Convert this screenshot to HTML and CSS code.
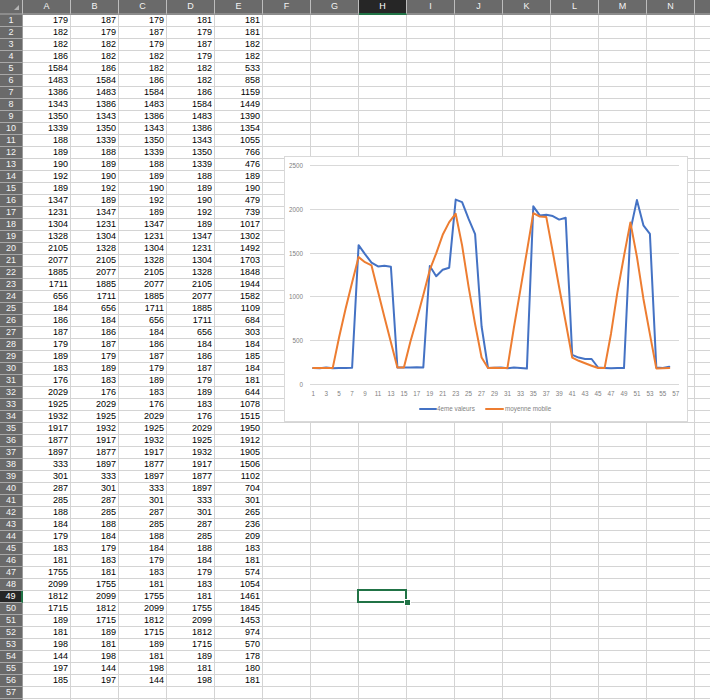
FILE: index.html
```html
<!DOCTYPE html>
<html lang="fr">
<head>
    <meta charset="UTF-8">
    <title>Feuille de calcul</title>
    <link rel="stylesheet" href="styles.css">
</head>
<body>
    <div id="sheet">
        <table id="grid">
            <thead id="grid-head"></thead>
            <tbody id="grid-body"></tbody>
        </table>

        <div id="selected-cell"></div>

        <div id="chart">
            <svg id="chart-svg" width="404" height="266" viewBox="0 0 404 266"></svg>
        </div>
    </div>

    <script src="sheet.js"></script>
</body>
</html>
```

FILE: styles.css
```css
html, body {
    margin: 0;
    padding: 0;
    background: #fff;
}

#sheet {
    position: relative;
    width: 710px;
    height: 700px;
    overflow: hidden;
    font-family: "Liberation Sans", Arial, sans-serif;
}

#grid {
    border-collapse: separate;
    border-spacing: 0;
    table-layout: fixed;
    width: 743px;
    font-size: 9px;
    color: #000;
}

#grid th,
#grid td {
    box-sizing: border-box;
    padding: 0;
    width: 48px;
    height: 12px;
    line-height: 11px;
    border-right: 1px solid #d4d4d4;
    border-bottom: 1px solid #d4d4d4;
    overflow: hidden;
}

#grid td {
    text-align: right;
    padding-right: 2px;
}

#grid th {
    background: #6a6a6a;
    color: #f4f4f4;
    font-weight: normal;
    text-align: center;
}

#grid thead th {
    height: 15px;
    line-height: 13px;
    border-right: 1px solid #bdbdbd;
    border-bottom: 2px solid #8c8c8c;
}

#grid .corner {
    position: relative;
    width: 23px;
}

.corner::after {
    content: "";
    position: absolute;
    right: 3px;
    bottom: 3px;
    border-left: 5px solid transparent;
    border-bottom: 5px solid #b4b4b4;
}

#grid tbody th {
    width: 23px;
    border-right: 1px solid #9c9c9c;
    border-bottom: 1px solid #a8a8a8;
}

#grid thead th.active {
    background: #262626;
    color: #fff;
    border-bottom: 2px solid #217346;
}

#grid tbody th.active {
    background: #262626;
    color: #fff;
    border-right: 2px solid #217346;
}

#selected-cell {
    position: absolute;
    left: 357px;
    top: 589px;
    width: 46px;
    height: 10px;
    border: 2px solid #217346;
}

#selected-cell::after {
    content: "";
    position: absolute;
    right: -5px;
    bottom: -4px;
    width: 5px;
    height: 5px;
    background: #217346;
    box-shadow: 0 0 0 1px #fff;
}

#chart {
    position: absolute;
    left: 284px;
    top: 156px;
    width: 404px;
    height: 266px;
    background: #fff;
    box-shadow: inset 0 0 0 1px #d9d9d9;
}

#chart-svg {
    display: block;
}

.gridline {
    stroke: #d9d9d9;
    stroke-width: 1;
}

.series {
    fill: none;
    stroke-width: 2;
    stroke-linejoin: round;
    stroke-linecap: round;
}

.series-blue {
    stroke: #4472c4;
}

.series-orange {
    stroke: #ed7d31;
}

.axis-label,
.legend-label {
    font-family: "Liberation Sans", Arial, sans-serif;
    font-size: 6.3px;
    fill: #7f7f7f;
}
```

FILE: sheet.js
```js
var colA = [179,182,182,186,1584,1483,1386,1343,1350,1339,188,189,190,192,189,1347,1231,1304,1328,2105,2077,1885,1711,656,184,186,187,179,189,183,176,2029,1925,1932,1917,1877,1897,333,301,287,285,188,184,179,183,181,1755,2099,1812,1715,189,181,198,144,197,185];
var colB = [187].concat(colA.slice(0, 55));
var colC = [179].concat(colB.slice(0, 55));
var colD = [181].concat(colC.slice(0, 55));
var colE = [181,181,182,182,533,858,1159,1449,1390,1354,1055,766,476,189,190,479,739,1017,1302,1492,1703,1848,1944,1582,1109,684,303,184,185,184,181,644,1078,1515,1950,1912,1905,1506,1102,704,301,265,236,209,183,181,574,1054,1461,1845,1453,974,570,178,180,181];

// last column and last row only peek in at the window edge, so no label there
var letters = "ABCDEFGHIJKLMN".split("").concat([""]);
var activeCol = "H";
var activeRow = 49;

// column headers
var head = '<tr><th class="corner"></th>';
for (var c = 0; c < letters.length; c++) {
    head += '<th' + (letters[c] === activeCol ? ' class="active"' : '') + '>' + letters[c] + '</th>';
}
document.getElementById("grid-head").innerHTML = head + '</tr>';

// rows
var body = "";
var columns = [colA, colB, colC, colD, colE];
for (var r = 1; r <= 58; r++) {
    body += '<tr><th' + (r === activeRow ? ' class="active"' : '') + '>' + (r < 58 ? r : "") + '</th>';
    for (var k = 0; k < letters.length; k++) {
        var value = columns[k] && columns[k][r - 1] !== undefined ? columns[k][r - 1] : "";
        body += '<td>' + value + '</td>';
    }
    body += '</tr>';
}
document.getElementById("grid-body").innerHTML = body;

// chart, coordinates are relative to the chart box
var svg = document.getElementById("chart-svg");
var plotLeft = 26, plotRight = 395, zeroY = 228, topY = 9;
var step = (plotRight - plotLeft) / 57;

function xAt(i) {
    return plotLeft + (i - 0.5) * step;
}

function yAt(v) {
    return zeroY - v * (zeroY - topY) / 2500;
}

function points(data) {
    var list = [];
    for (var i = 0; i < data.length; i++) {
        list.push(xAt(i + 1).toFixed(1) + "," + yAt(data[i]).toFixed(1));
    }
    return list.join(" ");
}

var out = "";
for (var v = 0; v <= 2500; v += 500) {
    var y = Math.round(yAt(v)) + 0.5;
    out += '<line class="gridline" x1="' + plotLeft + '" x2="' + plotRight + '" y1="' + y + '" y2="' + y + '"></line>';
    out += '<text class="axis-label" text-anchor="end" x="19" y="' + (y + 2.5) + '">' + v + '</text>';
}
for (var n = 1; n <= 57; n += 2) {
    out += '<text class="axis-label" text-anchor="middle" x="' + xAt(n).toFixed(1) + '" y="240">' + n + '</text>';
}
out += '<polyline class="series series-blue" points="' + points(colD) + '"></polyline>';
out += '<polyline class="series series-orange" points="' + points(colE) + '"></polyline>';

// legend
out += '<line class="series series-blue" x1="136" x2="152" y1="253" y2="253"></line>';
out += '<text class="legend-label" x="153" y="255">4eme valeurs</text>';
out += '<line class="series series-orange" x1="202" x2="219" y1="253" y2="253"></line>';
out += '<text class="legend-label" x="221" y="255">moyenne mobile</text>';
svg.innerHTML = out;
```
